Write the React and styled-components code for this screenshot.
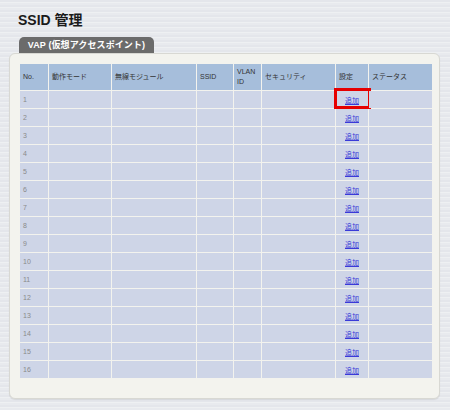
import React from "react";
import styled, { createGlobalStyle } from "styled-components";

const GlobalStyle = createGlobalStyle`
  html, body {
    margin: 0;
    padding: 0;
  }
  body {
    width: 450px;
    height: 410px;
    overflow: hidden;
    font-family: "Liberation Sans", "Noto Sans CJK JP", sans-serif;
    background-color: #e7e9ed;
    background-image: repeating-linear-gradient(
      180deg,
      #e4e6eb 0px,
      #e4e6eb 2px,
      #eef0f2 2px,
      #eef0f2 3px,
      #e8eaee 3px,
      #e8eaee 5px
    );
  }
`;

// STYLED COMPONENTS
const Page = styled.div`
  padding: 10px 10px 0 9px;
`;

const Title = styled.h1`
  margin: 0 0 0 9px;
  font-size: 14px;
  line-height: 20px;
  font-weight: bold;
  color: #1a1a1a;
`;

const TabBar = styled.div`
  display: flex;
  padding-left: 10px;
  margin-top: 7px;
`;

const Tab = styled.div`
  width: 135px;
  height: 16px;
  box-sizing: border-box;
  background: #6b6b6b;
  border-radius: 5px 5px 0 0;
  color: #fff;
  font-size: 9px;
  font-weight: bold;
  line-height: 16px;
  text-align: center;
  letter-spacing: 0.1px;
`;

const Panel = styled.div`
  width: 431px;
  box-sizing: border-box;
  background: #f3f3ee;
  border: 1px solid #d8d8d3;
  border-radius: 6px;
  box-shadow: 0 1px 1px rgba(0, 0, 0, 0.08);
  padding: 9px 8px 19px 9px;
`;

const Table = styled.table`
  border-collapse: separate;
  border-spacing: 1px;
  table-layout: fixed;
  width: 414px;
  font-size: 7px;
`;

const HeadCell = styled.th`
  height: 26px;
  padding: 0 3px;
  background: #a6bedb;
  color: #333;
  font-weight: normal;
  text-align: left;
  vertical-align: middle;
  line-height: 10px;
`;

const Cell = styled.td`
  height: 17px;
  padding: 0 3px;
  background: #ced5e7;
  color: #8a8a8a;
  vertical-align: middle;
  text-align: ${(p) => (p.$center ? "center" : "left")};
  position: relative;
`;

const AddLink = styled.a`
  color: #3a3ad8;
  text-decoration: underline;
  cursor: pointer;
`;

const Highlight = styled.span`
  position: absolute;
  top: -3px;
  left: -2px;
  right: -3px;
  bottom: -1px;
  border: 3px solid #e60000;
  pointer-events: none;
`;

const columns = [
  { label: "No.", width: 28 },
  { label: "動作モード", width: 62 },
  { label: "無線モジュール", width: 84 },
  { label: "SSID", width: 36 },
  { label: "VLAN ID", width: 27 },
  { label: "セキュリティ", width: 73 },
  { label: "設定", width: 32 },
  { label: "ステータス", width: 63 },
];

const rows = Array.from({ length: 16 }, (_, i) => i + 1);

export default function App() {
  return (
    <>
      <GlobalStyle />
      <Page>
        <Title>SSID 管理</Title>
        <TabBar>
          <Tab>VAP (仮想アクセスポイント)</Tab>
        </TabBar>
        <Panel>
          <Table>
            <colgroup>
              {columns.map((c) => (
                <col key={c.label} style={{ width: c.width }} />
              ))}
            </colgroup>
            <thead>
              <tr>
                {columns.map((c) => (
                  <HeadCell key={c.label}>{c.label}</HeadCell>
                ))}
              </tr>
            </thead>
            <tbody>
              {rows.map((n) => (
                <tr key={n}>
                  <Cell>{n}</Cell>
                  <Cell />
                  <Cell />
                  <Cell />
                  <Cell />
                  <Cell />
                  <Cell $center>
                    <AddLink>追加</AddLink>
                    {n === 1 && <Highlight />}
                  </Cell>
                  <Cell />
                </tr>
              ))}
            </tbody>
          </Table>
        </Panel>
      </Page>
    </>
  );
}
